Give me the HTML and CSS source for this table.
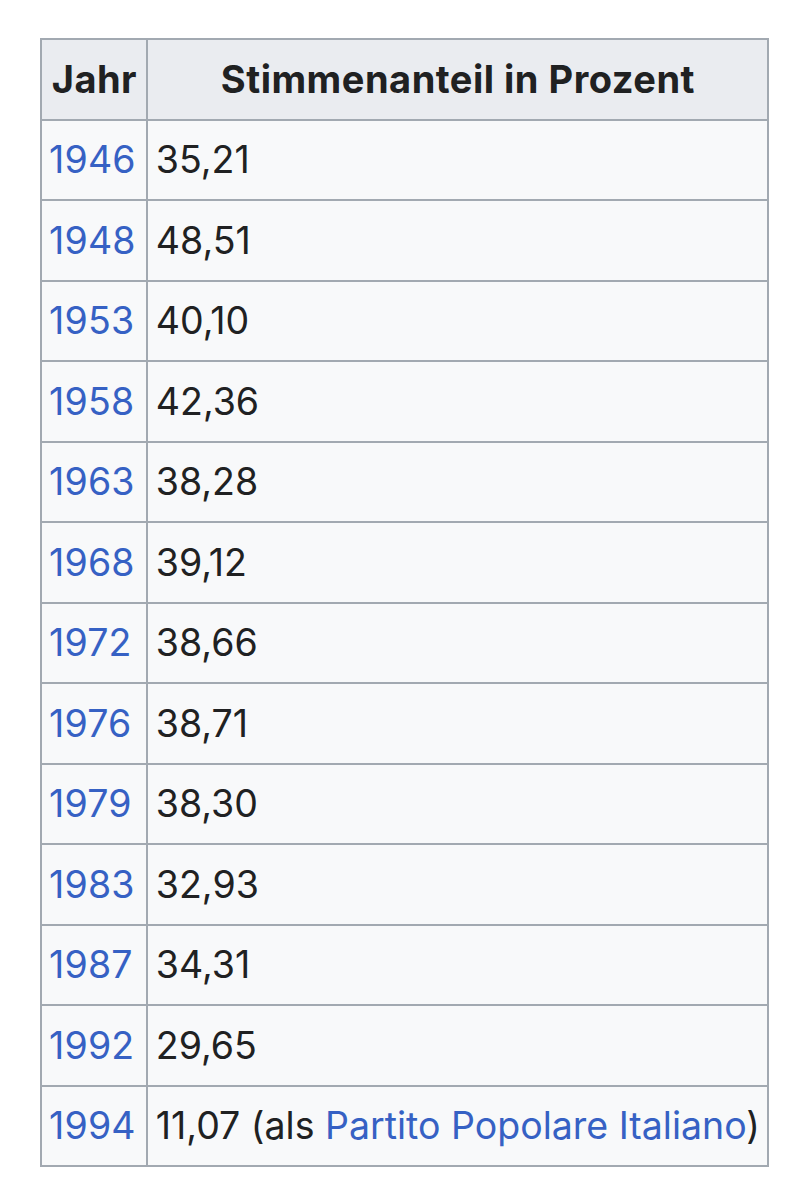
FILE: index.html
```html
<!DOCTYPE html>
<html lang="de">
<head>
<meta charset="utf-8">
<link rel="stylesheet" href="styles.css">
<title>Stimmenanteil</title>
</head>
<body>
<table class="wikitable">
  <thead>
    <tr><th>Jahr</th><th>Stimmenanteil in Prozent</th></tr>
  </thead>
  <tbody>
    <tr><td><a href="#">1946</a></td><td>35,21</td></tr>
    <tr><td><a href="#">1948</a></td><td>48,51</td></tr>
    <tr><td><a href="#">1953</a></td><td>40,10</td></tr>
    <tr><td><a href="#">1958</a></td><td>42,36</td></tr>
    <tr><td><a href="#">1963</a></td><td>38,28</td></tr>
    <tr><td><a href="#">1968</a></td><td>39,12</td></tr>
    <tr><td><a href="#">1972</a></td><td>38,66</td></tr>
    <tr><td><a href="#">1976</a></td><td>38,71</td></tr>
    <tr><td><a href="#">1979</a></td><td>38,30</td></tr>
    <tr><td><a href="#">1983</a></td><td>32,93</td></tr>
    <tr><td><a href="#">1987</a></td><td>34,31</td></tr>
    <tr><td><a href="#">1992</a></td><td>29,65</td></tr>
    <tr><td><a href="#">1994</a></td><td>11,07 (als <a href="#">Partito Popolare Italiano</a>)</td></tr>
  </tbody>
</table>
</body>
</html>
```
FILE: styles.css
```css
html, body {
  margin: 0;
  padding: 0;
  background: #ffffff;
}
body {
  padding: 38px 0 0 40px;
  font-family: Inter, "Liberation Sans", sans-serif;
  color: #202122;
}
.wikitable {
  border-collapse: collapse;
  background: #f8f9fa;
  border: 2px solid #a2a9b1;
  font-size: 37.5px;
}
.wikitable th,
.wikitable td {
  border: 2px solid #a2a9b1;
  height: 80.5px;
  padding: 0 7px 0 8px;
  box-sizing: border-box;
  text-align: left;
  font-weight: 400;
  white-space: nowrap;
}
.wikitable td:first-child {
  padding: 0 10px 0 7px;
  letter-spacing: 0.2px;
}
.wikitable th {
  background: #eaecf0;
  text-align: center;
  font-weight: 700;
  font-size: 38px;
  letter-spacing: 0.5px;
}
.wikitable a {
  color: #3661c4;
  text-decoration: none;
}
```
